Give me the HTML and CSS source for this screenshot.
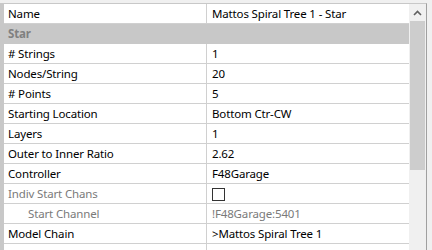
FILE: index.html
```html
<!DOCTYPE html>
<html lang="en">
<head>
    <meta charset="UTF-8">
    <title>Model Properties</title>
    <link rel="stylesheet" href="styles.css">
</head>
<body>
    <div class="panel">
        <div class="grid">
            <div class="row">
                <div class="label">Name</div>
                <div class="value">Mattos Spiral Tree 1 - Star</div>
            </div>
            <div class="row category">
                <div class="label">Star</div>
            </div>
            <div class="row">
                <div class="label"># Strings</div>
                <div class="value">1</div>
            </div>
            <div class="row">
                <div class="label">Nodes/String</div>
                <div class="value">20</div>
            </div>
            <div class="row">
                <div class="label"># Points</div>
                <div class="value">5</div>
            </div>
            <div class="row">
                <div class="label">Starting Location</div>
                <div class="value">Bottom Ctr-CW</div>
            </div>
            <div class="row">
                <div class="label">Layers</div>
                <div class="value">1</div>
            </div>
            <div class="row">
                <div class="label">Outer to Inner Ratio</div>
                <div class="value">2.62</div>
            </div>
            <div class="row">
                <div class="label">Controller</div>
                <div class="value">F48Garage</div>
            </div>
            <div class="row disabled">
                <div class="label">Indiv Start Chans</div>
                <div class="value"><span class="check"></span></div>
            </div>
            <div class="row disabled">
                <div class="label sub">Start Channel</div>
                <div class="value">!F48Garage:5401</div>
            </div>
            <div class="row">
                <div class="label">Model Chain</div>
                <div class="value">&gt;Mattos Spiral Tree 1</div>
            </div>
            <div class="row">
                <div class="label">Shadow Model For</div>
                <div class="value"></div>
            </div>
        </div>
        <div class="scrollbar">
            <div class="arrow">
                <svg width="9" height="6" viewBox="0 0 9 6">
                    <path d="M1 5 L4.5 1.5 L8 5" fill="none" stroke="#606060" stroke-width="1.6"/>
                </svg>
            </div>
            <div class="thumb"></div>
        </div>
    </div>
</body>
</html>
```

FILE: styles.css
```css
* {
    box-sizing: border-box;
    margin: 0;
    padding: 0;
}
body {
    background: #f0f0f0;
    font-family: 'Noto Sans', 'Liberation Sans', sans-serif;
    font-size: 11.5px;
    letter-spacing: -0.15px;
    color: #000000;
    overflow: hidden;
    padding-top: 3px;
}
.panel {
    display: flex;
    width: 427px;
    height: 247px;
    border-top: 1px solid #c8c8c8;
    border-right: 1px solid #a0a0a0;
    background: #ffffff;
    overflow: hidden;
}
.grid {
    width: 409px;
    border-left: 4px solid #c8c8c8;
}
.row {
    display: flex;
    height: 20px;
    border-bottom: 1px solid #d0d0d0;
    line-height: 19px;
    white-space: nowrap;
}
.label {
    width: 203px;
    padding-left: 4px;
    border-right: 1px solid #d0d0d0;
    overflow: hidden;
}
.value {
    flex: 1;
    padding-left: 5px;
    overflow: hidden;
}
.category {
    background: #c8c8c8;
    border-bottom-color: #c8c8c8;
    margin-left: -4px;
}
.category .label {
    padding-left: 8px;
    border-right: none;
    color: #808080;
    font-weight: bold;
}
.disabled {
    color: #7a7a7a;
}
.sub {
    padding-left: 24px;
}
.check {
    display: inline-block;
    width: 13px;
    height: 13px;
    border: 1px solid #333333;
    vertical-align: -3px;
}
.scrollbar {
    width: 17px;
    background: #f0f0f0;
    display: flex;
    flex-direction: column;
    align-items: center;
}
.arrow {
    height: 17px;
    display: flex;
    align-items: center;
    justify-content: center;
}
.thumb {
    width: 15px;
    height: 149px;
    background: #cdcdcd;
}
```
